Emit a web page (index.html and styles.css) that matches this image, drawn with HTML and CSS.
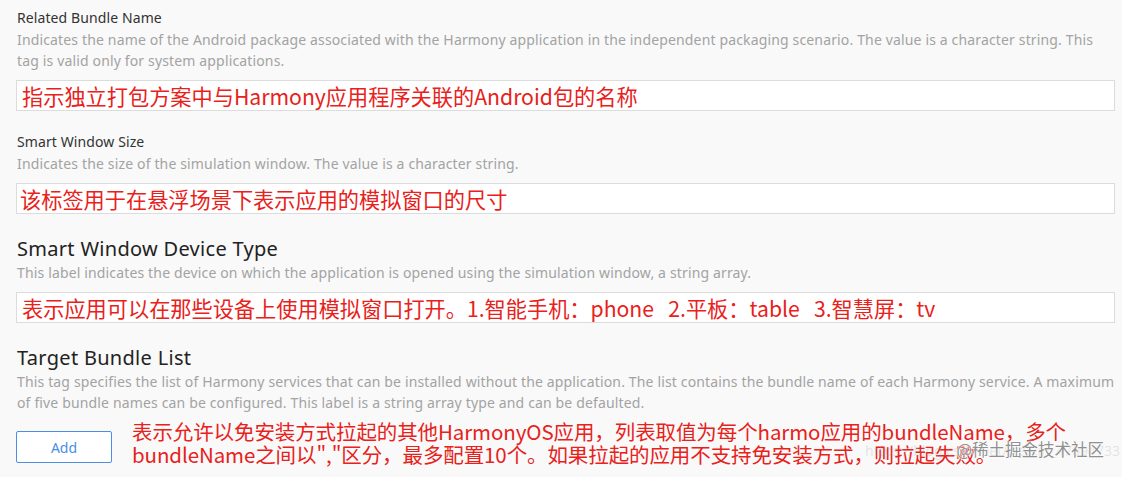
FILE: index.html
```html
<!DOCTYPE html>
<html lang="zh">
<head>
<meta charset="utf-8">
<link rel="stylesheet" href="styles.css">
</head>
<body>
<div class="page">
  <section class="field">
    <div class="label">Related Bundle Name</div>
    <div class="desc">Indicates the name of the Android package associated with the Harmony application in the independent packaging scenario. The value is a character string. This<br>tag is valid only for system applications.</div>
    <div class="input">指示独立打包方案中与Harmony应用程序关联的Android包的名称</div>
  </section>
  <section class="field">
    <div class="label">Smart Window Size</div>
    <div class="desc">Indicates the size of the simulation window. The value is a character string.</div>
    <div class="input input-narrow">该标签用于在悬浮场景下表示应用的模拟窗口的尺寸</div>
  </section>
  <section class="field field-big">
    <div class="label label-big">Smart Window Device Type</div>
    <div class="desc">This label indicates the device on which the application is opened using the simulation window, a string array.</div>
    <div class="input">表示应用可以在那些设备上使用模拟窗口打开。1.智能手机：phone &nbsp; 2.平板：table &nbsp; 3.智慧屏：tv</div>
  </section>
  <section class="field field-big">
    <div class="label label-big">Target Bundle List</div>
    <div class="desc">This tag specifies the list of Harmony services that can be installed without the application. The list contains the bundle name of each Harmony service. A maximum<br>of five bundle names can be configured. This label is a string array type and can be defaulted.</div>
    <div class="add-row">
      <button class="add-btn">Add</button>
      <div class="note">表示允许以免安装方式拉起的其他HarmonyOS应用，列表取值为每个harmo应用的bundleName，多个<br>bundleName之间以","区分，最多配置10个。如果拉起的应用不支持免安装方式，则拉起失败。</div>
    </div>
  </section>
</div>
<div class="watermark"><span class="wm-url">https://blog.csdn.net/weixin_47094733</span><span class="wm-main">@稀土掘金技术社区</span></div>
</body>
</html>
```

FILE: styles.css
```css
html, body {
  margin: 0;
  padding: 0;
  background: #f9f9f9;
}
body {
  width: 1122px;
  height: 477px;
  overflow: hidden;
  position: relative;
  font-family: "Noto Sans", "Noto Sans CJK SC", sans-serif;
}
.page {
  padding: 8px 7px 0 16px;
  display: flex;
  flex-direction: column;
}
.field {
  display: flex;
  flex-direction: column;
  margin-bottom: 21px;
}
.label {
  font-size: 14px;
  line-height: 20px;
  letter-spacing: 0.1px;
  color: #333;
  padding-left: 1px;
}
.label-big {
  font-size: 20px;
  line-height: 26px;
  letter-spacing: 0.3px;
  color: #222;
}
.desc {
  font-size: 14px;
  line-height: 21px;
  color: #a3a3a3;
  padding-left: 1px;
  letter-spacing: 0.15px;
  white-space: nowrap;
  margin-top: 1px;
  margin-bottom: 9px;
}
.label-big + .desc {
  margin-top: 0;
}
.input {
  height: 29px;
  border: 1px solid #dcdcdc;
  background: #fff;
  font-family: "Noto Sans CJK SC", sans-serif;
  font-size: 21.2px;
  line-height: 29px;
  color: #e8211b;
  padding-left: 5px;
  white-space: pre;
  overflow: hidden;
}
.input-narrow {
  padding-left: 3px;
}
.field-big {
  margin-top: 1px;
  margin-bottom: 21px;
}
.add-row {
  display: flex;
  align-items: flex-start;
  margin-top: -2px;
}
.add-btn {
  width: 96px;
  height: 32px;
  margin-top: 11px;
  background: #fff;
  border: 1px solid #4b8ee6;
  border-radius: 2px;
  color: #4b8ee6;
  font-family: "Noto Sans", sans-serif;
  font-size: 14px;
  padding: 0;
  flex: none;
}
.note {
  margin-left: 20px;
  font-family: "Noto Sans CJK SC", sans-serif;
  font-size: 20.5px;
  line-height: 23px;
  letter-spacing: -0.1px;
  color: #e8211b;
  white-space: nowrap;
}
.watermark {
  position: absolute;
  right: 6px;
  bottom: 16px;
  width: 200px;
  height: 24px;
}
.wm-url {
  position: absolute;
  right: -4px;
  top: 4px;
  font-family: "Noto Sans", sans-serif;
  font-size: 14px;
  color: rgba(160, 160, 160, 0.25);
  white-space: nowrap;
}
.wm-main {
  position: absolute;
  right: 12px;
  top: 0;
  font-family: "Noto Sans CJK SC", sans-serif;
  font-size: 16.5px;
  color: #909090;
  text-shadow: 0 0 2px #fff, 0 0 2px #fff, 0 0 1px #fff;
  white-space: nowrap;
}
```
